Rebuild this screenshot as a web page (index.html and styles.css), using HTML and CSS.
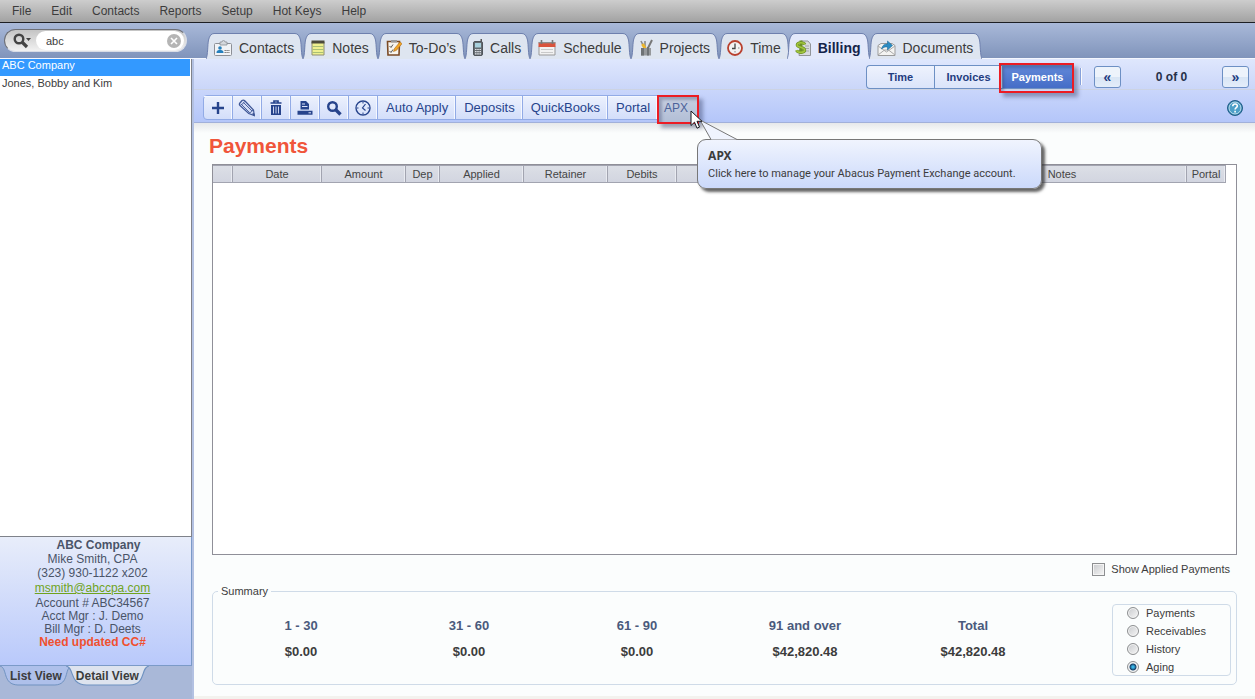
FILE: index.html
```html
<!DOCTYPE html>
<html lang="en">
<head>
<meta charset="utf-8">
<title>Billing - Payments</title>
<link rel="stylesheet" href="styles.css">
</head>
<body>
<svg class="defs" aria-hidden="true">
  <symbol id="cap" viewBox="0 0 8 26" preserveAspectRatio="none">
    <path class="cap-fill" d="M0 26C2 22 1.500 12 2.500 7Q4 .5 8 .5V26Z"/>
    <path class="cap-line" d="M0 26C2 22 1.500 12 2.500 7Q4 .5 8 .5"/>
  </symbol>
  <symbol id="foot" viewBox="0 0 72 20" preserveAspectRatio="none">
    <path class="foot-shape" d="M0 0C8 2 2 18.500 18 19H55C70 18.500 64 2 72 0"/>
  </symbol>
</svg>
<div class="app">
  <nav class="menubar" aria-label="Main menu">
    <button>File</button><button>Edit</button><button>Contacts</button><button>Reports</button><button>Setup</button><button>Hot Keys</button><button>Help</button>
  </nav>

  <header class="strip">
    <form class="search">
      <button class="search-kind" type="button" aria-label="Search options">
        <svg width="20" height="16" viewBox="0 0 20 16"><circle cx="6" cy="6" r="4.300" fill="none" stroke="#444" stroke-width="2.400"/><path d="M9 9l5 5" stroke="#444" stroke-width="3.200"/><path d="M13 5h5l-2.500 3z" fill="#444"/></svg>
      </button>
      <input type="text" value="abc" aria-label="Search">
      <button class="search-clear" type="button" aria-label="Clear">
        <svg width="14" height="14" viewBox="0 0 14 14"><circle cx="7" cy="7" r="7" fill="#b5b5b5"/><path d="M4 4l6 6M10 4l-6 6" stroke="#fff" stroke-width="1.600"/></svg>
      </button>
    </form>
    <nav class="tabs" aria-label="Sections">
      <button class="tab"><svg class="cap"><use href="#cap"/></svg><span class="tab-body">
        <svg width="18" height="18" viewBox="0 0 18 18"><rect x=".5" y="4.500" width="17" height="12" rx="1" fill="#f1f3f6" stroke="#8c8f96"/><path d="M6 6V3h2a1.500 1.500 0 0 1 3 0h2v3z" fill="#d5d8dc" stroke="#8c8f96" stroke-width=".8"/><circle cx="6" cy="9" r="1.800" fill="#2580bd"/><path d="M2.500 14c0-3 2-3 3.500-3s3.500 0 3.500 3z" fill="#2580bd"/><path d="M10.500 11.500h5M10.500 13.500h5" stroke="#777" stroke-dasharray="1.400 .5"/></svg>
        <span>Contacts</span></span><svg class="cap flip"><use href="#cap"/></svg></button>
      <button class="tab"><svg class="cap"><use href="#cap"/></svg><span class="tab-body">
        <svg width="14" height="18" viewBox="0 0 14 18"><path d="M1 3h12v13H1z" fill="#eef08f" stroke="#8e8e72"/><path d="M.5 1.500h13v3H.5z" fill="#4b4a3a"/><path d="M1.500 7.500h11M1.500 10.500h11M1.500 13.500h11" stroke="#a9bf75"/></svg>
        <span>Notes</span></span><svg class="cap flip"><use href="#cap"/></svg></button>
      <button class="tab"><svg class="cap"><use href="#cap"/></svg><span class="tab-body">
        <svg width="16" height="18" viewBox="0 0 16 18"><path d="M1.500 2.500h12l-.5 13.500H2z" fill="#f8f5ee" stroke="#7b4a24" stroke-width="1.600"/><path d="M5 1h6v2.500H5z" fill="#999"/><path d="M3.500 7l1.500 1.500 2-3M3.500 12l1.500 1.500 2-3" fill="none" stroke="#555"/><path d="M7.500 12.500l1-3L14 3l2 1.700-5.500 6.600z" fill="#f2a527" stroke="#a96a16" stroke-width=".6"/></svg>
        <span>To-Do’s</span></span><svg class="cap flip"><use href="#cap"/></svg></button>
      <button class="tab"><svg class="cap"><use href="#cap"/></svg><span class="tab-body">
        <svg width="10" height="18" viewBox="0 0 10 18"><path d="M7.500 0h1.500v4H7.500z" fill="#555"/><rect x=".5" y="2.500" width="9" height="14" rx="1.500" fill="#656b70" stroke="#50565b"/><path d="M2 4h6v4.500H2z" fill="#a8d0dc"/><path d="M2 10.500h6M2 12.700h6M2 14.800h6" stroke="#dfe3e6" stroke-width="1.200" stroke-dasharray="1.600 .6"/></svg>
        <span>Calls</span></span><svg class="cap flip"><use href="#cap"/></svg></button>
      <button class="tab"><svg class="cap"><use href="#cap"/></svg><span class="tab-body">
        <svg width="18" height="18" viewBox="0 0 18 18"><path d="M1 7.500h16V16H1z" fill="#f2f2f2" stroke="#999"/><path d="M.5 3.500h17V8H.5z" fill="#d9533c"/><path d="M.5 3h17v1.300H.5z" fill="#8e8e8e"/><path d="M3.500 1v4M14.500 1v4" stroke="#777" stroke-width="1.600"/><path d="M3 10.500h12M3 13.500h12" stroke="#c9c9c9"/></svg>
        <span>Schedule</span></span><svg class="cap flip"><use href="#cap"/></svg></button>
      <button class="tab"><svg class="cap"><use href="#cap"/></svg><span class="tab-body">
        <svg width="14" height="18" viewBox="0 0 14 18"><path d="M2 2l4 8M6 2v7" stroke="#8b8b8b" stroke-width="1.600"/><path d="M13 1l-4 8" stroke="#777" stroke-width="2"/><path d="M3.500 5l3 5" stroke="#edb62c" stroke-width="3"/><path d="M2 9h10v7.500H2z" fill="#96999b"/><path d="M2 9h3v7.500H2zM8 8h2v8.500H8z" fill="#6f7375"/></svg>
        <span>Projects</span></span><svg class="cap flip"><use href="#cap"/></svg></button>
      <button class="tab"><svg class="cap"><use href="#cap"/></svg><span class="tab-body">
        <svg width="16" height="18" viewBox="0 0 16 18"><circle cx="8" cy="9" r="7" fill="#f3f3f3" stroke="#b9412e" stroke-width="1.800"/><path d="M8 4.500V9.500H5" fill="none" stroke="#444" stroke-width="1.300"/><path d="M11 9h1.500M8 12v1.500" stroke="#888"/></svg>
        <span>Time</span></span><svg class="cap flip"><use href="#cap"/></svg></button>
      <button class="tab active" aria-current="page"><svg class="cap"><use href="#cap"/></svg><span class="tab-body">
        <svg width="16" height="18" viewBox="0 0 16 18"><path d="M6 2h7l2.500 3v11.500H4z" fill="#d8dadd" stroke="#929599"/><path d="M10 7h4M10 9.500h4M10 12h4" stroke="#a5a8ab"/><path d="M9.800 5.500C9 3.300 2.500 3 2.200 6c-.3 2.600 7.500 2 7.500 5 0 3-7 3.200-8.200.3M6 1.500v13.500" fill="none" stroke="#6c9025" stroke-width="3"/><path d="M9.800 5.500C9 3.300 2.500 3 2.200 6c-.3 2.600 7.500 2 7.500 5 0 3-7 3.200-8.200.3" fill="none" stroke="#a3c63e" stroke-width="1.600"/></svg>
        <span>Billing</span></span><svg class="cap flip"><use href="#cap"/></svg></button>
      <button class="tab"><svg class="cap"><use href="#cap"/></svg><span class="tab-body">
        <svg width="19" height="18" viewBox="0 0 19 18"><path d="M1 6.500l3-2h11l3 2v10H1z" fill="#f4f4f2" stroke="#9b9b9b"/><path d="M1 16l6.500-5h4L18 16M1 7l8.500 6L18 7" fill="none" stroke="#aaa"/><path d="M4.500 10c1-4 3-5 6-5V2l5 4.500-5 4.500V8c-2.500-.3-4 .3-6 2z" fill="#2c8cc3" stroke="#226b99" stroke-width=".6"/></svg>
        <span>Documents</span></span><svg class="cap flip"><use href="#cap"/></svg></button>
    </nav>
  </header>

  <div class="workspace">
    <aside class="sidebar">
      <ul class="client-list">
        <li class="selected">ABC Company</li>
        <li>Jones, Bobby and Kim</li>
      </ul>
      <section class="client">
        <p class="client-name">ABC Company</p>
        <p>Mike Smith, CPA</p>
        <p>(323) 930-1122 x202</p>
        <p class="client-mail"><a href="mailto:msmith@abccpa.com">msmith@abccpa.com</a></p>
        <p class="tight">Account # ABC34567</p>
        <p class="tight">Acct Mgr : J. Demo</p>
        <p class="tight">Bill Mgr : D. Deets</p>
        <p class="tight alert">Need updated CC#</p>
      </section>
      <nav class="views" aria-label="Client views">
        <button class="view"><svg class="foot"><use href="#foot"/></svg><span>List View</span></button>
        <button class="view current"><svg class="foot"><use href="#foot"/></svg><span>Detail View</span></button>
      </nav>
    </aside>

    <main class="main">
      <div class="subnav">
        <div class="segments">
          <button>Time</button><button>Invoices</button><button class="on">Payments</button>
        </div>
        <span class="divider"></span>
        <div class="pager">
          <button aria-label="Previous">«</button>
          <span>0 of 0</span>
          <button aria-label="Next">»</button>
        </div>
      </div>
      <div class="actions">
        <div class="toolbar">
          <button class="tool" aria-label="Add"><svg width="16" height="16" viewBox="0 0 16 16"><path d="M8 2v12M2 8h12" stroke="#27448c" stroke-width="2.400"/></svg></button>
          <button class="tool" aria-label="Edit"><svg width="18" height="18" viewBox="0 0 18 18" fill="none" stroke="#3f5796" stroke-width=".9"><path d="M1.500 4.500L4 1.500q1.500-1 3 .5l8.500 9 .8 5.500-5.600-2L2 6.500q-1-1-.5-2z" fill="#d3dcf5" stroke-width="1.200"/><path d="M3.500 5.500l8 8M5.500 3.500l8.500 8.500M2.500 6q2.500-.5 4-3.500M11 14q2.500-.5 4-3"/><path d="M14.500 15l1.800 1.500-.3-2z" fill="#27448c"/></svg></button>
          <button class="tool" aria-label="Delete"><svg width="14" height="16" viewBox="0 0 14 16"><path d="M1.500 3h11M5 2.500V1h4v1.500" fill="none" stroke="#27448c" stroke-width="1.700"/><path d="M2 5h10v10H2z" fill="#27448c"/><path d="M4.500 6.500v7M7 6.500v7M9.500 6.500v7" stroke="#dce4fa" stroke-width=".9"/></svg></button>
          <button class="tool" aria-label="Print"><svg width="16" height="16" viewBox="0 0 16 16"><path d="M3.500 1H9l3 3v5.500H3.500zM.5 10.800h15v4H.5z" fill="#27448c"/><path d="M5 4h3M5 6.500h5.500" stroke="#dce4fa"/><path d="M11.500 12.800h2.500" stroke="#dce4fa"/></svg></button>
          <button class="tool" aria-label="Find"><svg width="16" height="16" viewBox="0 0 16 16"><circle cx="6.500" cy="6.500" r="4.300" fill="none" stroke="#27448c" stroke-width="2.400"/><path d="M9.500 9.500l5 5" stroke="#27448c" stroke-width="3.400"/></svg></button>
          <button class="tool" aria-label="History"><svg width="16" height="16" viewBox="0 0 16 16" fill="none" stroke="#27448c"><circle cx="8" cy="8" r="7" stroke-width="1.400"/><path d="M10.500 4L7.500 8l3 2.500" stroke-width="1.200"/><path d="M8 2v1.500M8 12.500V14M2 8h1.500M12.500 8H14"/></svg></button>
          <button class="tool text">Auto Apply</button>
          <button class="tool text">Deposits</button>
          <button class="tool text">QuickBooks</button>
          <button class="tool text">Portal</button>
          <div class="apx">
            <button class="tool hovered" aria-describedby="apx-tip">APX</button>
            <div class="tip" id="apx-tip" role="tooltip">
              <svg class="tip-tail" width="42" height="22" viewBox="0 0 42 22"><path d="M15 21.500L4 2l37 19.500" fill="#f0f4fe" stroke="#777"/></svg>
              <strong>APX</strong>
              <span>Click here to manage your Abacus Payment Exchange account.</span>
            </div>
            <svg class="pointer" width="13" height="20" viewBox="0 0 13 20"><path d="M1 1v14.500l3.500-3.300 2.500 6 2.500-1.100L7 11.300h5z" fill="#fff" stroke="#15171d"/></svg>
          </div>
        </div>
        <button class="help" aria-label="Help">
          <svg width="16" height="16" viewBox="0 0 16 16"><circle cx="8" cy="8" r="7.500" fill="#2a7ba8" stroke="#245f88"/><circle cx="8" cy="8" r="6" fill="#4d9fc8" stroke="#cfe8f3" stroke-width=".9"/><path d="M5.800 6.200c0-3 4.500-2.800 4.500-.3 0 1.700-2.200 1.600-2.200 3.500M8.100 10.700v1.700" fill="none" stroke="#fff" stroke-width="1.600"/></svg>
        </button>
      </div>

      <div class="content">
        <h1>Payments</h1>
        <div class="grid">
          <table>
            <colgroup><col class="c-mark"><col class="c-date"><col class="c-money"><col class="c-dep"><col class="c-money"><col class="c-money"><col class="c-debit"><col class="c-payer"><col><col class="c-portal"></colgroup>
            <thead><tr><th></th><th>Date</th><th>Amount</th><th>Dep</th><th>Applied</th><th>Retainer</th><th>Debits</th><th></th><th>Notes</th><th>Portal</th></tr></thead>
          </table>
        </div>
        <label class="applied"><input type="checkbox"><span>Show Applied Payments</span></label>
        <fieldset class="summary">
          <legend>Summary</legend>
          <dl class="aging">
            <div><dt>1 - 30</dt><dd>$0.00</dd></div>
            <div><dt>31 - 60</dt><dd>$0.00</dd></div>
            <div><dt>61 - 90</dt><dd>$0.00</dd></div>
            <div><dt>91 and over</dt><dd>$42,820.48</dd></div>
            <div><dt>Total</dt><dd>$42,820.48</dd></div>
          </dl>
          <div class="modes" role="radiogroup" aria-label="Summary type">
            <label><input type="radio" name="mode"><span>Payments</span></label>
            <label><input type="radio" name="mode"><span>Receivables</span></label>
            <label><input type="radio" name="mode"><span>History</span></label>
            <label><input type="radio" name="mode" checked><span>Aging</span></label>
          </div>
        </fieldset>
      </div>
    </main>
  </div>
</div>
</body>
</html>
```
FILE: styles.css
```css
* { box-sizing: border-box; }

body {
  margin: 0;
  font: 12px/14px "Liberation Sans", Arial, sans-serif;
  color: #3c3c3c;
}

button, input {
  font: inherit;
  color: inherit;
  margin: 0;
  padding: 0;
  border: 0;
  background: none;
}

p, ul, dl, dd, h1 { margin: 0; padding: 0; }

.defs { position: absolute; width: 0; height: 0; }
.flip { transform: scaleX(-1); }

.app {
  display: flex;
  flex-direction: column;
  min-height: 100vh;
}

/* Menu bar */
.menubar {
  display: flex;
  gap: 20px;
  height: 23px;
  padding-left: 12px;
  border-bottom: 1px solid #1d1f24;
  background: linear-gradient(#cdcdcd, #a2a2a2);
}

/* Search and section tabs */
.strip {
  display: flex;
  height: 36px;
  border-bottom: 1px solid #f4f7fe;
  background: linear-gradient(#a9b9d9, #8094bb);
}

.search {
  display: flex;
  align-items: center;
  flex: none;
  width: 183px;
  height: 23px;
  margin: 6px 19px 0 4px;
  padding: 1px 2px;
  border: 1px solid #6d6f76;
  border-right-color: #d9dde6;
  border-bottom-color: #d9dde6;
  border-radius: 12px;
  background: linear-gradient(#c4c4c4, #f2f2f2);
}
.search-kind { display: flex; width: 29px; padding-left: 6px; }
.search input {
  flex: 1;
  min-width: 0;
  height: 19px;
  padding-left: 10px;
  border-radius: 10px 0 0 10px;
  background: #fff;
  font-size: 11px;
  outline: 0;
}
.search-clear {
  display: flex;
  align-items: center;
  height: 19px;
  padding-right: 3px;
  border-radius: 0 10px 10px 0;
  background: #fff;
}

.tabs { display: flex; padding-top: 10px; }
.tab {
  display: flex;
  height: 25px;
  --face: #dee5f0;
  font-size: 14px;
}
.cap { width: 8px; height: 26px; flex: none; }
.cap-fill { fill: var(--face); }
.cap-line { fill: none; stroke: #6e80ae; }
.tab-body {
  display: flex;
  align-items: center;
  gap: 7px;
  height: 26px;
  padding: 3px 1px 0 0;
  border-top: 1px solid #6e80ae;
  background: var(--face);
}
.tab.active {
  --face: #e3e9fb;
  z-index: 1;
  margin: 0 -1px 0 -3px;
  color: #14244a;
  font-weight: bold;
}

.workspace { display: flex; flex: 1; }

/* Sidebar */
.sidebar {
  display: flex;
  flex-direction: column;
  flex: none;
  width: 194px;
  border-right: 2px solid #b3c1e2;
}
.client-list {
  flex: 1;
  list-style: none;
  border: solid #7f828a;
  border-width: 0 1px 1px 0;
  background: #fff;
  font-size: 11px;
}
.client-list li { height: 18px; padding: 0 2px; }
.client-list .selected { height: 17px; margin-right: 1px; background: #39f; color: #fff; line-height: 13px; }

.client {
  height: 129px;
  padding: 1px 6px 0 0;
  border-right: 1px solid #7b9ac8;
  border-bottom: 1px solid #7b9ac8;
  background: linear-gradient(#e8edfa, #b9c9fb);
  color: #4a5468;
  text-align: center;
}
.client-name { padding-left: 12px; font-weight: bold; }
.client-mail { line-height: 17px; }
.client-mail a { color: #6fa31d; }
.client .tight { line-height: 13px; }
.client .alert { color: #f0502f; font-weight: bold; }

.views {
  display: flex;
  height: 33px;
  background: #a9b8d8;
}
.view {
  position: relative;
  height: 20px;
  padding: 0 10px;
  --face: #aec0ea;
  font-weight: bold;
}
.view.current { --face: #dde3ee; margin-left: -6px; }
.view span { position: relative; }
.foot { position: absolute; inset: 0; width: 100%; height: 100%; }
.foot-shape { fill: var(--face); stroke: #6f92c0; }

/* Sub navigation */
.main { display: flex; flex-direction: column; flex: 1; min-width: 0; background: #fbfdfd; }
.subnav {
  display: flex;
  align-items: flex-start;
  justify-content: flex-end;
  height: 31px;
  padding: 6px 6px 0;
  border-bottom: 1px solid #ccd3e3;
  background: linear-gradient(#dfe7fd, #cad6f9);
  color: #1f3c80;
  font-weight: bold;
}
.segments { display: flex; font-size: 11px; }
.segments button {
  width: 68px;
  height: 24px;
  border: 1px solid #6d90c4;
  border-right: 0;
  background: linear-gradient(#eef2fd, #dbe4fa);
}
.segments button:first-child { border-radius: 4px 0 0 4px; }
.segments .on {
  position: relative;
  width: 70px;
  background: linear-gradient(#6288d8, #456dc7);
  color: #fff;
}
.segments .on::after, .apx::after {
  content: "";
  position: absolute;
  inset: -3px -2px -5px -4px;
  border: 2px solid #ec1c24;
  box-shadow: 4px 4px 4px rgba(40, 50, 90, .4), inset 3px 3px 3px rgba(40, 50, 90, .3);
  pointer-events: none;
}
.divider {
  width: 2px;
  height: 17px;
  margin: 3px 12px 0 8px;
  border-left: 1px solid #8ba6e0;
  background: #fff;
}
.pager { display: flex; align-items: center; margin-top: 1px; }
.pager button {
  width: 27px;
  height: 22px;
  border: 1px solid #6d90c4;
  border-radius: 3px;
  background: linear-gradient(#edf3fb 50%, #d8e5f5 50%, #e4edfa);
  font-size: 14px;
}
.pager span { width: 101px; color: #26304a; text-align: center; }

/* Toolbar */
.actions {
  display: flex;
  align-items: flex-start;
  justify-content: space-between;
  height: 33px;
  padding: 5px 12px 0 9px;
  border-bottom: 1px solid #a1b0da;
  background: linear-gradient(#c9d6fb, #b4c6f9);
}
.toolbar {
  display: flex;
  height: 25px;
  border: 1px solid #92abe6;
  border-radius: 4px;
  background: linear-gradient(#ecf1fd, #d3defa);
  color: #27448c;
}
.tool {
  display: flex;
  align-items: center;
  justify-content: center;
  width: 29px;
  height: 23px;
  border-right: 1px solid #92abe6;
  box-shadow: inset -1px 0 #f5f8ff, inset 0 1px #f5f8ff;
}
.tool.text { width: auto; padding: 0 7px 0 8px; font-size: 13px; }
.apx { position: relative; }
.apx::after { inset: -1px -1px -5px -1px; }
.tool.hovered {
  width: 40px;
  height: 26px;
  padding: 0 4px 3px 0;
  border: 0;
  box-shadow: none;
  background: linear-gradient(#c8d0e2, #b2bed6);
  color: #4c639a;
}
.pointer { position: absolute; left: 32px; top: 14px; z-index: 3; }

.tip {
  position: absolute;
  left: 39px;
  top: 43px;
  z-index: 2;
  display: flex;
  flex-direction: column;
  gap: 3px;
  width: max-content;
  min-width: 343px;
  padding: 8px 25px 7px 10px;
  border: 1px solid #777;
  border-radius: 9px;
  background: linear-gradient(#f0f4fe, #cbd9fb);
  box-shadow: 3px 3px 3px rgba(50, 50, 50, .75);
  color: #3c3c3c;
  font: 11px/15px Roboto, sans-serif;
}
.tip strong { font-family: "Noto Sans", sans-serif; font-size: 12px; }
.tip-tail { position: absolute; left: -2px; top: -22px; }
.help { display: flex; margin-top: 5px; }

/* Payments grid */
.content {
  display: flex;
  flex-direction: column;
  flex: 1;
  padding: 11px 18px 11px;
  border-bottom: 3px solid #f3f2ee;
  background: linear-gradient(#e6e8ea, #fbfdfd 10px);
}
h1 { margin-left: -3px; color: #f0553a; font-size: 21px; line-height: 24px; }
.grid {
  flex: 1;
  min-height: 120px;
  margin-top: 6px;
  padding-right: 10px;
  border: 1px solid #8f8f98;
  background: #fff;
}
table { width: 100%; border-collapse: separate; border-spacing: 0; table-layout: fixed; }
th {
  height: 18px;
  padding: 0;
  border: solid #a2a4b0;
  border-width: 1px 1px 1px 0;
  background: linear-gradient(#dcdfe6, #d2d5e0);
  box-shadow: inset -1px 0 #e9ebf1;
  color: #454545;
  font-size: 11px;
  font-weight: normal;
}
.c-mark { width: 20px; }
.c-date { width: 89px; }
.c-money { width: 84px; }
.c-dep { width: 34px; }
.c-debit { width: 69px; }
.c-payer { width: 261px; }
.c-portal { width: 39px; }

.applied {
  display: flex;
  align-items: center;
  align-self: flex-end;
  gap: 6px;
  margin: 7px 7px 0 0;
  font-size: 11px;
}
input[type="checkbox"], input[type="radio"] {
  appearance: none;
  width: 13px;
  height: 13px;
  border: 1px solid #8d8f91;
  background: linear-gradient(135deg, #c8cacd, #f6f6f6);
  box-shadow: inset 0 0 0 1px #f4f4f4;
}
input[type="radio"] { width: 12px; height: 12px; border-radius: 50%; }
input[type="radio"]:checked {
  background: radial-gradient(circle, #38b4e6 0 1px, #173f66 3px, #eef1f4 4px);
}

/* Summary */
.summary {
  display: flex;
  align-items: flex-start;
  justify-content: space-between;
  min-width: 0;
  margin: 8px 0 0;
  padding: 6px 5px 8px 4px;
  border: 1px solid #cfdbe8;
  border-radius: 5px;
}
.summary legend { margin-left: 1px; padding: 0 3px; font-size: 11px; }
.aging {
  display: grid;
  grid-template-columns: repeat(5, 1fr);
  flex: 0 1 840px;
  padding-top: 15px;
  font-size: 13px;
  font-weight: bold;
  line-height: 14px;
  text-align: center;
}
.aging dt { margin-bottom: 12px; color: #4a5a7c; }
.modes {
  display: flex;
  flex-direction: column;
  gap: 2px;
  flex: 0 0 119px;
  padding-left: 14px;
  border: 1px solid #cfdbe8;
  border-radius: 4px;
  font-size: 11px;
}
.modes label { display: flex; align-items: center; gap: 7px; height: 16px; }
```
